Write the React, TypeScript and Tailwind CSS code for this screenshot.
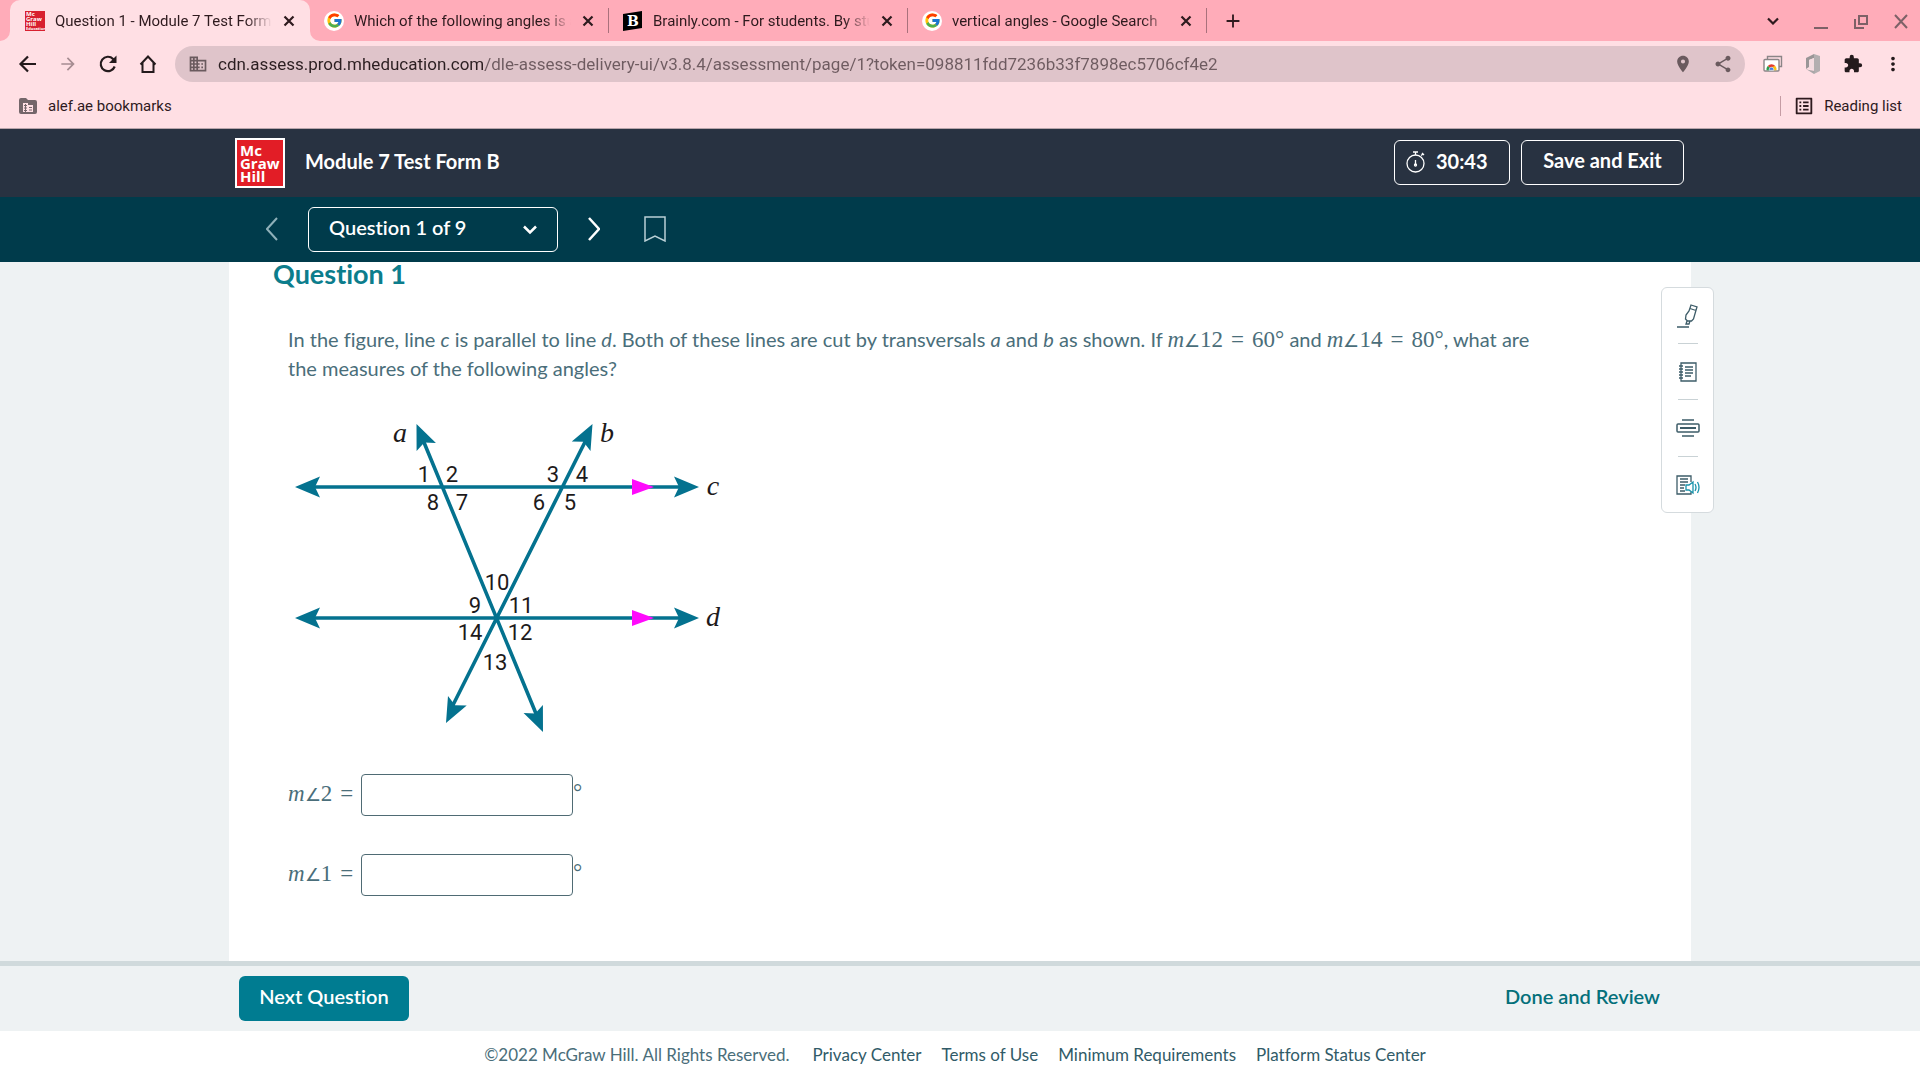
import React from "react";
import {
  MdAdd,
  MdArrowForward,
  MdBusiness,
  MdExtension,
  MdMoreVert,
  MdOutlineListAlt,
  MdPlace,
  MdShare,
} from "react-icons/md";
import { FcGoogle } from "react-icons/fc";

const URL_TEXT =
  "cdn.assess.prod.mheducation.com/dle-assess-delivery-ui/v3.8.4/assessment/page/1?token=098811fdd7236b33f7898ec5706cf4e2";

function McGrawFavicon() {
  return (
    <svg width="20" height="20" viewBox="0 0 20 20" className="shrink-0" aria-hidden="true">
      <rect width="20" height="20" fill="#d8202f" />
      <g fill="#fff" fontFamily="Open Sans, sans-serif" fontWeight="700">
        <text x="1" y="5" fontSize="6">Mc</text>
        <text x="1" y="10" fontSize="6">Graw</text>
        <text x="1" y="15" fontSize="6">Hill</text>
        <text x="1" y="19" fontSize="4">Education</text>
      </g>
    </svg>
  );
}

function GoogleFavicon() {
  return (
    <span className="flex size-5 shrink-0 items-center justify-center rounded-full bg-white">
      <FcGoogle size={17} />
    </span>
  );
}

function BrainlyFavicon() {
  return (
    <svg width="20" height="20" viewBox="0 0 20 20" className="shrink-0" aria-hidden="true">
      <path d="M0 3 19 0v17L0 20Z" fill="#000" />
      <text x="4" y="15" fontSize="14" fontWeight="700" fill="#fff" fontFamily="DejaVu Serif, serif">B</text>
    </svg>
  );
}

function TabFoot({ side }: { side: "left" | "right" }) {
  return (
    <svg
      width="10"
      height="10"
      viewBox="0 0 10 10"
      aria-hidden="true"
      className={side === "left" ? "absolute bottom-0 -left-2.5" : "absolute bottom-0 -right-2.5"}
    >
      <path d={side === "left" ? "M10 0v10H0A10 10 0 0 0 10 0Z" : "M0 0v10h10A10 10 0 0 1 0 0Z"} fill="#ffdfe4" />
    </svg>
  );
}

function Tab({ icon, title, active }: { icon: React.ReactNode; title: string; active?: boolean }) {
  return (
    <div
      className={
        active
          ? "relative flex h-full w-[300px] min-w-0 items-center rounded-t-[10px] bg-[#ffdfe4] pl-[15px]"
          : "relative flex h-full w-[299px] min-w-0 items-center pl-[14px]"
      }
    >
      {active && <TabFoot side="left" />}
      {active && <TabFoot side="right" />}
      {icon}
      <a
        href="#"
        className="ml-[10px] min-w-0 flex-1 overflow-hidden whitespace-nowrap text-[15px] leading-5 text-[#2e1a1e] [mask-image:linear-gradient(to_right,#000_88%,transparent)]"
      >
        {title}
      </a>
      <button aria-label={"Close " + title} className="mr-[11px] ml-[7px] flex size-5 items-center justify-center text-[#2e1a1e]">
        <svg width="12" height="12" viewBox="0 0 12 12"><path d="m1.500 1.500 9 9M10.500 1.500l-9 9" stroke="currentColor" strokeWidth="2.200" /></svg>
      </button>
      {!active && <span className="absolute right-0 h-[25px] w-px bg-[#a9717c]" />}
    </div>
  );
}

function TabStrip() {
  return (
    <div className="flex h-[41px] items-center bg-[#ffacb9] pl-[10px] text-[#2e1a1e]">
      <Tab active icon={<McGrawFavicon />} title="Question 1 - Module 7 Test Form" />
      <Tab icon={<GoogleFavicon />} title="Which of the following angles is a" />
      <Tab icon={<BrainlyFavicon />} title="Brainly.com - For students. By stu" />
      <Tab icon={<GoogleFavicon />} title="vertical angles - Google Search" />
      <button aria-label="New tab" className="ml-[14px] flex size-6 items-center justify-center">
        <MdAdd size={22} />
      </button>
      <div className="ml-auto flex items-center gap-5 pr-[9px] text-[#7d6167]">
        <button aria-label="Search tabs" className="mr-2 flex size-5 items-center justify-center text-[#2e1a1e]">
          <svg width="12" height="8" viewBox="0 0 12 8" fill="none"><path d="m1 1.500 5 5 5-5" stroke="currentColor" strokeWidth="2.200" /></svg>
        </button>
        <button aria-label="Minimize" className="flex size-5 items-center justify-center">
          <svg width="20" height="20" viewBox="0 0 20 20"><path d="M3 17h14" stroke="currentColor" strokeWidth="2" /></svg>
        </button>
        <button aria-label="Restore" className="flex size-5 items-center justify-center">
          <svg width="20" height="20" viewBox="0 0 20 20" fill="none" stroke="currentColor" strokeWidth="2">
            <path d="M8 5h8v8H8ZM4 8v9h9" />
          </svg>
        </button>
        <button aria-label="Close window" className="flex size-5 items-center justify-center">
          <svg width="20" height="20" viewBox="0 0 20 20"><path d="m4 4 12 13M16 4 4 17" stroke="currentColor" strokeWidth="2" /></svg>
        </button>
      </div>
    </div>
  );
}

function ChromeCardsIcon() {
  return (
    <svg width="20" height="20" viewBox="0 0 20 20" aria-hidden="true">
      <path d="M4.500 5V2.500h14v10H16" fill="none" stroke="#8b8587" strokeWidth="1.400" />
      <rect x="1" y="5.500" width="15" height="11.500" rx="1" fill="#fff" stroke="#8b8587" strokeWidth="1.400" />
      <path d="M8.500 15 4.700 12a5 5 0 0 1 7.600 0Z" fill="#e33b2e" />
      <path d="M8.500 15 4.700 12a5 5 0 0 0-1.200 4.300h4Z" fill="#2a9d4b" />
      <path d="m8.500 13 3.800-1a5 5 0 0 1 1.200 4.300h-4Z" fill="#fbc117" />
      <path d="M6.300 16.300a2.300 2.300 0 1 1 4.400 0Z" fill="#3f7ee8" stroke="#fff" strokeWidth=".6" />
    </svg>
  );
}

function OfficeIcon() {
  return (
    <svg width="20" height="20" viewBox="0 0 20 20" aria-hidden="true">
      <path d="m11 0 6 2v15l-6 3V0Z" fill="#b3afb0" />
      <path d="M11 0 3 4v11l3-2V6l5-2Z" fill="#9a9697" />
      <path d="m3 15 8 5 1-3-6-1Z" fill="#aaa7a8" />
      <path d="m6 6 5-2v12l-5-1Z" fill="#f4dce0" />
    </svg>
  );
}

function AddressBar() {
  return (
    <div className="flex h-[46px] items-center bg-[#ffdfe4] pl-[18px] text-[#241a1c]">
      <div className="flex items-center gap-5">
        <button aria-label="Back">
          <svg width="20" height="20" viewBox="0 0 20 20" fill="none" stroke="currentColor" strokeWidth="2.200"><path d="M18 10H3M10 2.500 2.500 10l7.500 7.500" /></svg>
        </button>
        <button aria-label="Forward" className="text-[#a68c91]"><MdArrowForward size={20} /></button>
        <button aria-label="Reload">
          <svg width="20" height="20" viewBox="0 0 20 20" fill="none" stroke="currentColor" strokeWidth="2.200">
            <path d="M16.700 12.500a7.200 7.200 0 1 1-1.600-7.600L17 7" />
            <path d="M18.500 1.500V9H11Z" fill="currentColor" stroke="none" />
          </svg>
        </button>
        <button aria-label="Home">
          <svg width="20" height="20" viewBox="0 0 20 20" fill="none" stroke="currentColor" strokeWidth="2"><path d="M2.500 10.500 10 2.500l7.500 8M4.500 9v9h11V9" /></svg>
        </button>
      </div>
      <div className="ml-[17px] flex h-9 flex-1 items-center rounded-full bg-[#dfc4ca] pr-[12px] pl-[13px] text-[#6a5a5e]">
        <MdBusiness size={20} className="shrink-0" />
        <input
          aria-label="Address"
          defaultValue={URL_TEXT}
          className="ml-[10px] min-w-0 flex-1 bg-[linear-gradient(to_right,#2b1e21_267px,#6e5b60_267px)] bg-clip-text text-[17px] leading-6 text-transparent outline-none"
        />
        <button aria-label="Location"><MdPlace size={20} /></button>
        <button aria-label="Share" className="ml-5"><MdShare size={20} /></button>
      </div>
      <div className="flex items-center gap-5 pr-[17px] pl-[18px]">
        <button aria-label="Cast"><ChromeCardsIcon /></button>
        <button aria-label="Office"><OfficeIcon /></button>
        <button aria-label="Extensions"><MdExtension size={20} /></button>
        <button aria-label="Menu"><MdMoreVert size={22} className="-mx-px" /></button>
      </div>
    </div>
  );
}

function BookmarksBar() {
  return (
    <div className="flex h-[42px] items-center border-b border-[#b9a5ab] bg-[#ffdfe4] pr-[18px] pb-1 pl-[19px] text-[15px] leading-5 text-[#2e1a1e]">
      <a href="#" className="flex items-center gap-[11px]">
        <svg width="18" height="18" viewBox="0 0 18 18" aria-hidden="true">
          <path d="M0 3a2 2 0 0 1 2-2h5l2 2h7a2 2 0 0 1 2 2v10a2 2 0 0 1-2 2H2a2 2 0 0 1-2-2Z" fill="#74666a" />
          <path d="M4 6h5v2h5v7H4Z" fill="#ffdfe4" />
          <path d="M5 8.500h3M5 11h3M5 13.500h3M10 10.500h3M10 13h3M6.500 7v8" stroke="#74666a" strokeWidth="1" />
        </svg>
        <span>alef.ae bookmarks</span>
      </a>
      <div className="ml-auto flex items-center">
        <span className="h-5 w-px bg-[#c59ca4]" />
        <button className="flex items-center gap-[9px] pl-[12px]">
          <MdOutlineListAlt size={22} />
          Reading list
        </button>
      </div>
    </div>
  );
}

function AssessmentHeader() {
  return (
    <header className="bg-[#283241]">
      <div className="mx-auto flex h-[68px] max-w-[1450px] items-center pr-px text-white">
        <div className="flex size-[50px] flex-col justify-center border-2 border-white bg-[#e21d26] pl-[3px] font-['Open_Sans',sans-serif] text-[15px] leading-[13px] font-bold">
          <span>Mc</span>
          <span>Graw</span>
          <span>Hill</span>
        </div>
        <h1 className="ml-5 flex-1 pb-[5px] text-[20px] leading-6 font-bold">Module 7 Test Form B</h1>
        <div className="mb-0.5 flex h-[45px] w-[116px] items-center rounded-md border border-white pl-[11px]">
          <svg width="19" height="22" viewBox="0 0 19 22" fill="none" stroke="currentColor" strokeWidth="1.300" aria-hidden="true">
            <circle cx="9.500" cy="12.500" r="8.500" />
            <path d="M9.500 4V1.500M7 1h5M15 4.500l2-1.500M16 2l2 2M9.500 9v5" />
            <circle cx="9.500" cy="14" r="1" />
          </svg>
          <span className="ml-[11px] pb-0.5 text-[20px] leading-6 font-bold">30:43</span>
        </div>
        <button className="mb-0.5 ml-[11px] h-[45px] w-[163px] rounded-md border border-white pb-[4px] text-[20px] leading-6 font-bold">
          Save and Exit
        </button>
      </div>
    </header>
  );
}

function QuestionNav() {
  return (
    <nav className="bg-[#003b4b]">
      <div className="mx-auto flex h-[65px] max-w-[1450px] items-center pl-[31px] text-white">
        <button aria-label="Previous question" className="pb-0.5 text-[#8fb0b9]">
          <svg width="12" height="24" viewBox="0 0 12 24" fill="none" stroke="currentColor" strokeWidth="2"><path d="M11 1 1 12l10 11" /></svg>
        </button>
        <div className="relative ml-[30px]">
          <select
            aria-label="Question"
            className="h-[45px] w-[250px] appearance-none rounded-md border border-white bg-[#003b4b] pb-[5px] pl-5 text-[20px] leading-6 font-semibold text-white"
          >
            <option>Question 1 of 9</option>
          </select>
          <svg width="14" height="10" viewBox="0 0 14 10" fill="none" stroke="currentColor" strokeWidth="2.500" className="pointer-events-none absolute top-[18px] right-[21px]">
            <path d="m1 1.500 6 6 6-6" />
          </svg>
        </div>
        <button aria-label="Next question" className="ml-[30px] pb-0.5">
          <svg width="12" height="24" viewBox="0 0 12 24" fill="none" stroke="currentColor" strokeWidth="2.500"><path d="m1 1 10 11L1 23" /></svg>
        </button>
        <button aria-label="Bookmark question" className="ml-[44px] pb-0.5 text-[#b9d0d6]">
          <svg width="22" height="26" viewBox="0 0 22 26" fill="none" stroke="currentColor" strokeWidth="1.500"><path d="M1 1h20v24l-10-5-10 5Z" /></svg>
        </button>
      </div>
    </nav>
  );
}

/* An arrow head whose tip is at (x, y), pointing along the given angle in degrees. */
function ArrowHead({ x, y, angle }: { x: number; y: number; angle: number }) {
  return <path d="M0 0-25-10.500l5 10.500-5 10.500Z" fill="#04728f" transform={`translate(${x} ${y}) rotate(${angle})`} />;
}

const ANGLE_LABELS: [string, number, number][] = [
  ["1", 144, 72],
  ["2", 172, 72],
  ["3", 273, 72],
  ["4", 302, 72],
  ["8", 153, 100],
  ["7", 182, 100],
  ["6", 259, 100],
  ["5", 290, 100],
  ["10", 217, 180],
  ["9", 195, 203],
  ["11", 241, 203],
  ["14", 190, 230],
  ["12", 240, 230],
  ["13", 215, 260],
];

const LINE_LABELS: [string, number, number][] = [
  ["a", 120, 32],
  ["b", 327, 32],
  ["c", 433, 85],
  ["d", 433, 216],
];

function AnglesFigure() {
  return (
    <svg
      width="452"
      height="340"
      viewBox="8 0 452 340"
      role="img"
      aria-label="Parallel lines c and d cut by transversals a and b"
    >
      <g stroke="#04728f" strokeWidth="3.600" fill="none">
        <path d="M30 77h376M30 208h376M143 30l114 276M306 30 172 297" />
      </g>
      <ArrowHead x={15} y={77} angle={180} />
      <ArrowHead x={419} y={77} angle={0} />
      <ArrowHead x={15} y={208} angle={180} />
      <ArrowHead x={419} y={208} angle={0} />
      <ArrowHead x={136.5} y={14} angle={-113} />
      <ArrowHead x={263} y={322} angle={67} />
      <ArrowHead x={312.5} y={14} angle={-63} />
      <ArrowHead x={166} y={313} angle={117} />
      <path d="m352 69 22 8-22 8ZM352 200l22 8-22 8Z" fill="#ff0afc" />
      <g fill="#1d1a1b" textAnchor="middle" fontFamily="Roboto, sans-serif" fontSize="22">
        {ANGLE_LABELS.map(([label, x, y]) => (
          <text key={label} x={x} y={y}>{label}</text>
        ))}
      </g>
      <g fill="#1d1a1b" textAnchor="middle" fontFamily="Liberation Serif, serif" fontSize="28" fontStyle="italic">
        {LINE_LABELS.map(([label, x, y]) => (
          <text key={label} x={x} y={y}>{label}</text>
        ))}
      </g>
    </svg>
  );
}

function MathText({ angle, value }: { angle: string; value?: string }) {
  return (
    <span className="font-['Liberation_Serif',serif] text-[23px] leading-none whitespace-nowrap">
      <i>m</i>
      <span className="text-[18px] leading-none">∠</span>
      {angle}
      <span className={value ? "mx-2" : "ml-2"}>=</span>
      {value && <>{value}°</>}
    </span>
  );
}

function AnswerRow({ angle }: { angle: string }) {
  const id = "angle-" + angle;
  return (
    <div className="flex h-[42px] items-center">
      <label htmlFor={id} className="w-[73px] pb-0.5">
        <MathText angle={angle} />
      </label>
      <input id={id} className="h-[42px] w-[212px] rounded border border-[#4f6b74] bg-white px-2 text-[20px] outline-none" />
      <span className="self-start pt-[7px] font-['Liberation_Serif',serif] text-[23px] leading-none">°</span>
    </div>
  );
}

function ToolRail() {
  return (
    <div className="absolute top-[25px] -right-[23px] flex w-[53px] flex-col items-center rounded-md border border-[#d5dbde] bg-white text-[#3d5c68]">
      <button aria-label="Highlighter" className="flex h-[55px] w-full items-center justify-center">
        <svg width="22" height="24" viewBox="0 0 22 24" fill="none" stroke="currentColor" strokeWidth="1.300">
          <path d="m14 1 6 2-1.500 5-2 7-2 2h-4l-2-2 .5-4 3-4ZM13 4.500l6 2M10 17l-1 3h3l1-3M0 23h12" />
        </svg>
      </button>
      <span className="h-px w-5 bg-[#c9d2d5]" />
      <button aria-label="Notes" className="flex h-[55px] w-full items-center justify-center">
        <svg width="20" height="20" viewBox="0 0 20 20" fill="none" stroke="currentColor" strokeWidth="1.300">
          <path d="M3 1h15v18H3ZM1 4h4M1 7h4M1 10h4M1 13h4M1 16h4M7 5h8M7 8h8M7 11h8M7 14h6" />
        </svg>
      </button>
      <span className="h-px w-5 bg-[#c9d2d5]" />
      <button aria-label="Line reader" className="flex h-14 w-full items-center justify-center">
        <svg width="24" height="20" viewBox="0 0 24 20" fill="none" stroke="currentColor" strokeWidth="1.500">
          <path d="M6 2h12M6 18h12" />
          <rect x="1" y="6" width="22" height="8" rx="1" />
          <path d="M4 10h16" strokeWidth="2" />
        </svg>
      </button>
      <span className="h-px w-5 bg-[#c9d2d5]" />
      <button aria-label="Read aloud" className="flex h-[55px] w-full items-center justify-center">
        <svg width="24" height="20" viewBox="0 0 24 20" fill="none" stroke="currentColor" strokeWidth="1.300">
          <path d="M15 7V1H1v18h14v-2M4 4h8M4 7h8M4 10h5M4 13h4M4 16h5" />
          <path d="M10 10h3l4-3v11l-4-3h-3ZM19 9q2 3.500 0 7M21.500 7q3 5.500 0 11" stroke="#1993ab" />
        </svg>
      </button>
    </div>
  );
}

function QuestionPanel() {
  return (
    <main className="flex flex-1 justify-center bg-[#eef2f3]">
      <div className="relative w-full max-w-[1462px] bg-white pl-[44px] text-[#4a6e7a]">
        <h2 className="text-[27px] leading-6 font-bold text-[#0c7d8c]">Question 1</h2>
        <div className="mt-[39px] pl-[15px]">
          <p className="max-w-[1260px] text-[20px] leading-[29px]">
            In the figure, line <i>c</i> is parallel to line <i>d</i>. Both of these lines are cut by transversals <i>a</i> and{" "}
            <i>b</i> as shown. If <MathText angle="12" value="60" /> and <MathText angle="14" value="80" />, what are the
            measures of the following angles?
          </p>
          <div className="mt-[27px]">
            <AnglesFigure />
          </div>
          <div className="mt-6 flex flex-col gap-[38px] pb-10">
            <AnswerRow angle="2" />
            <AnswerRow angle="1" />
          </div>
        </div>
        <ToolRail />
      </div>
    </main>
  );
}

function ActionBar() {
  return (
    <div className="border-t-[5px] border-[#d0dadc] bg-[#eef2f3]">
      <div className="mx-auto flex h-[65px] max-w-[1442px] items-center justify-between pr-[21px]">
        <button className="h-[45px] w-[170px] rounded-md bg-[#007c91] pb-[5px] text-[20px] leading-6 font-semibold text-white">
          Next Question
        </button>
        <button className="pb-[5px] text-[20px] leading-6 font-semibold text-[#04707a]">Done and Review</button>
      </div>
    </div>
  );
}

function PageFooter() {
  return (
    <footer className="flex h-[49px] items-center justify-center gap-5 bg-white pr-[10px] pb-0.5 text-[17px] leading-6 text-[#315b68]">
      <span className="mr-[3px] text-[#4a6e7a]">©2022 McGraw Hill. All Rights Reserved.</span>
      <a href="#">Privacy Center</a>
      <a href="#">Terms of Use</a>
      <a href="#">Minimum Requirements</a>
      <a href="#">Platform Status Center</a>
    </footer>
  );
}

export default function App() {
  return (
    <div className="flex min-h-screen flex-col bg-white font-[Lato,sans-serif] [font-variant-ligatures:none]">
      <div className="font-[Roboto,sans-serif]">
        <TabStrip />
        <AddressBar />
        <BookmarksBar />
      </div>
      <AssessmentHeader />
      <QuestionNav />
      <QuestionPanel />
      <ActionBar />
      <PageFooter />
    </div>
  );
}
